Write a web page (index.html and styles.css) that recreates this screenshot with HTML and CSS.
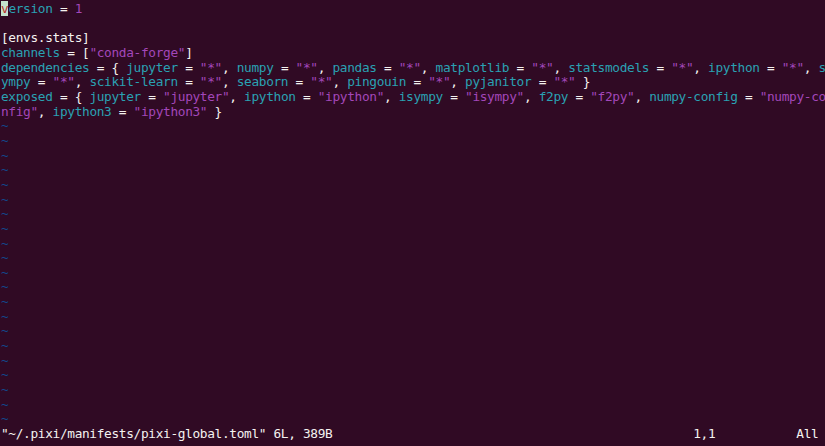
FILE: index.html
```html
<!DOCTYPE html>
<html>
<head>
<meta charset="utf-8">
<link rel="stylesheet" href="styles.css">
</head>
<body>
<div class="screen">
<div class="row"><span class="cursor">v</span><span class="k">ersion</span> = <span class="s">1</span></div>
<div class="row"> </div>
<div class="row">[envs.stats]</div>
<div class="row"><span class="k">channels</span> = [<span class="s">"conda-forge"</span>]</div>
<div class="row"><span class="k">dependencies</span> = { <span class="k">jupyter</span> = <span class="s">"*"</span>, <span class="k">numpy</span> = <span class="s">"*"</span>, <span class="k">pandas</span> = <span class="s">"*"</span>, <span class="k">matplotlib</span> = <span class="s">"*"</span>, <span class="k">statsmodels</span> = <span class="s">"*"</span>, <span class="k">ipython</span> = <span class="s">"*"</span>, <span class="k">s</span></div>
<div class="row"><span class="k">ympy</span> = <span class="s">"*"</span>, <span class="k">scikit-learn</span> = <span class="s">"*"</span>, <span class="k">seaborn</span> = <span class="s">"*"</span>, <span class="k">pingouin</span> = <span class="s">"*"</span>, <span class="k">pyjanitor</span> = <span class="s">"*"</span> }</div>
<div class="row"><span class="k">exposed</span> = { <span class="k">jupyter</span> = <span class="s">"jupyter"</span>, <span class="k">ipython</span> = <span class="s">"ipython"</span>, <span class="k">isympy</span> = <span class="s">"isympy"</span>, <span class="k">f2py</span> = <span class="s">"f2py"</span>, <span class="k">numpy-config</span> = <span class="s">"numpy-co</span></div>
<div class="row"><span class="s">nfig"</span>, <span class="k">ipython3</span> = <span class="s">"ipython3"</span> }</div>
<div class="row t">~</div>
<div class="row t">~</div>
<div class="row t">~</div>
<div class="row t">~</div>
<div class="row t">~</div>
<div class="row t">~</div>
<div class="row t">~</div>
<div class="row t">~</div>
<div class="row t">~</div>
<div class="row t">~</div>
<div class="row t">~</div>
<div class="row t">~</div>
<div class="row t">~</div>
<div class="row t">~</div>
<div class="row t">~</div>
<div class="row t">~</div>
<div class="row t">~</div>
<div class="row t">~</div>
<div class="row t">~</div>
<div class="row t">~</div>
<div class="row t">~</div>
<div class="row">"~/.pixi/manifests/pixi-global.toml" 6L, 389B                                                 1,1           All</div>
</div>
</body>
</html>
```
FILE: styles.css
```css
html, body {
  margin: 0;
  padding: 0;
  background: #300a24;
  height: 100%;
  overflow: hidden;
}
.screen {
  padding: 2px 0 0 1px;
  font-family: "DejaVu Sans Mono", "Liberation Mono", monospace;
  font-size: 12.8px;
  letter-spacing: -0.34px;
  color: #f4f2f0;
}
.row {
  height: 14.66px;
  line-height: 14.66px;
  white-space: pre;
}
.k { color: #2aa1b3; }
.s { color: #a347ba; }
.t { color: #12488b; }
.cursor {
  background: #c6e2cf;
  color: #b8322a;
}
```
